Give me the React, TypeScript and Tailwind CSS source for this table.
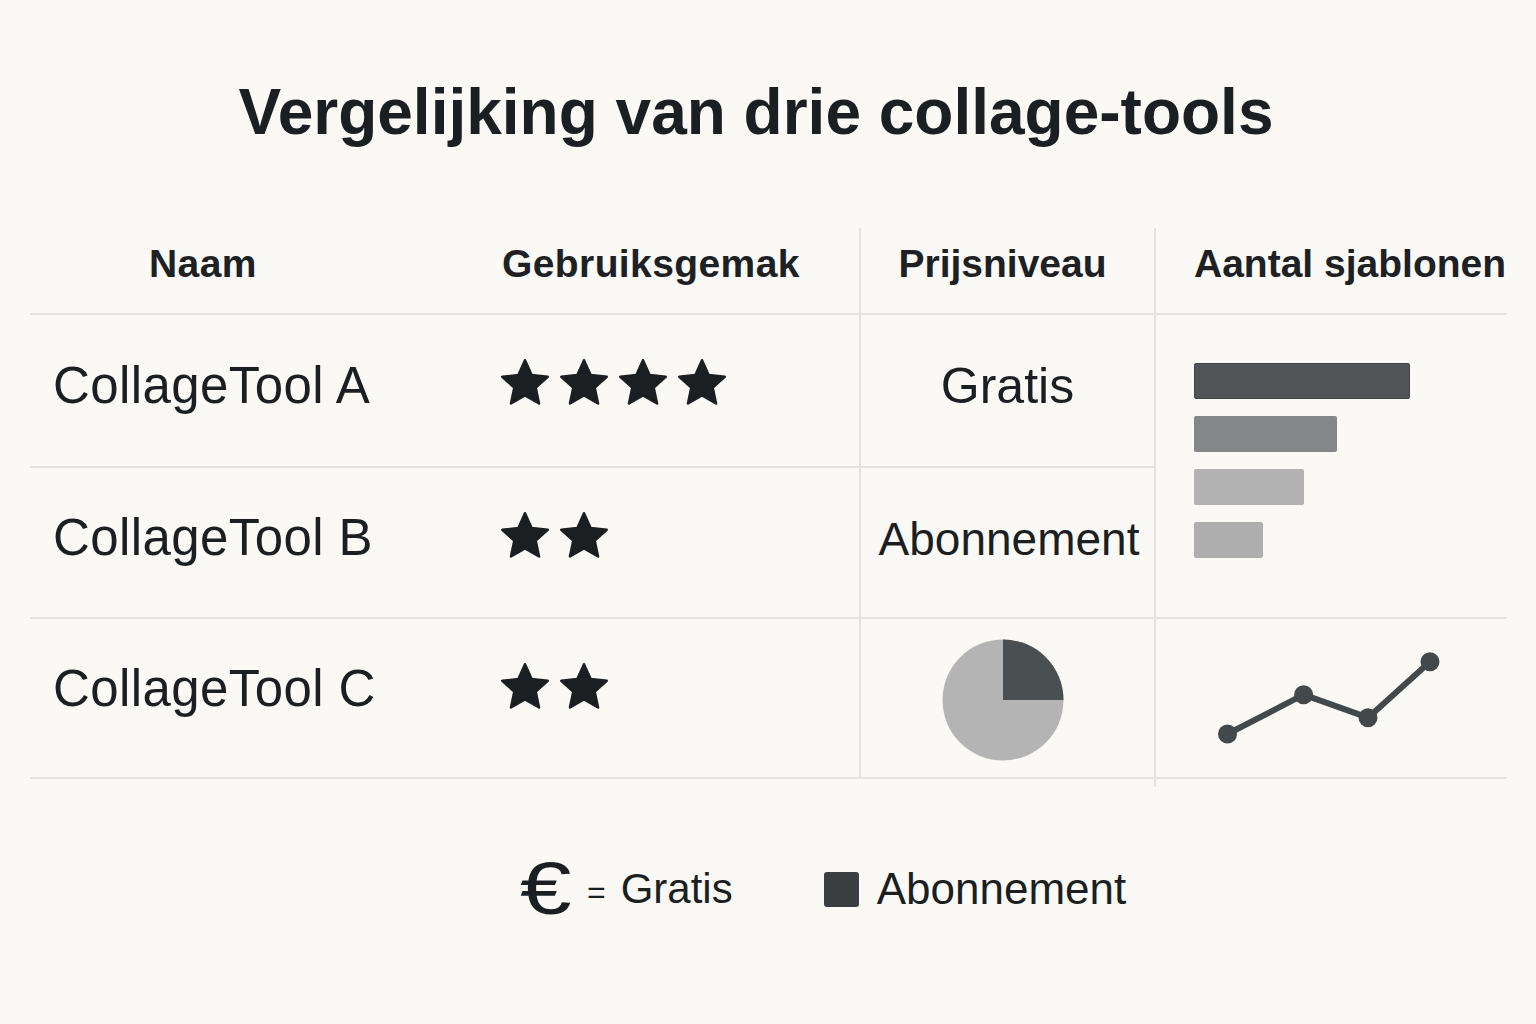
import React from 'react';

const line = 'border-[#e6e3df]';

function starPoints(cx: number, cy: number, R: number, r: number) {
  const pts: string[] = [];
  for (let i = 0; i < 10; i++) {
    const rad = i % 2 === 0 ? R : r;
    const a = (-90 + i * 36) * (Math.PI / 180);
    pts.push(`${(cx + rad * Math.cos(a)).toFixed(2)},${(cy + rad * Math.sin(a)).toFixed(2)}`);
  }
  return pts.join(' ');
}

const STAR = starPoints(24, 25.15, 23.9, 11.3);

const Star: React.FC = () => (
  <svg width="48" height="46" viewBox="0 0 48 46" className="shrink-0">
    <polygon points={STAR} fill="#1b1f22" stroke="#1b1f22" strokeWidth="2.5" strokeLinejoin="round" />
  </svg>
);

const Stars: React.FC<{ count: number }> = ({ count }) => (
  <div className="flex gap-[11px]">
    {Array.from({ length: count }).map((_, i) => (
      <Star key={i} />
    ))}
  </div>
);

const bars = [
  { w: 'w-[216px]', c: 'bg-[#515557] border border-[#3f4345]' },
  { w: 'w-[143px]', c: 'bg-[#858687]' },
  { w: 'w-[110px]', c: 'bg-[#b3b3b4]' },
  { w: 'w-[69px]', c: 'bg-[#aeaeaf]' },
];

export default function App() {
  return (
    <div className="min-h-screen w-full bg-[#fbf9f6] font-['Liberation_Sans',Arial,sans-serif] text-[#1b1f22]">
      {/* Title */}
      <h1 className="pt-[80px] pr-[24px] text-center text-[64px] font-bold leading-none">
        Vergelijking van drie collage-tools
      </h1>

      {/* Comparison table */}
      <div className="mt-[84px] ml-[30px] grid grid-cols-[447px_384px_295px_351px] grid-rows-[87px_153px_151px_160px_8px]">
        {/* Header */}
        <div className={`border-b-2 ${line} pl-[119px] pt-[16px] text-[39px] font-bold leading-none tracking-[0.4px] text-[#1d2124]`}>
          Naam
        </div>
        <div className={`border-b-2 border-r-2 ${line} pl-[25px] pt-[16px] text-[39px] font-bold leading-none tracking-[0.4px] text-[#1d2124]`}>
          Gebruiksgemak
        </div>
        <div className={`border-b-2 border-r-2 ${line} pr-[10px] pt-[16px] text-center text-[39px] font-bold leading-none text-[#1d2124]`}>
          Prijsniveau
        </div>
        <div className={`border-b-2 ${line} pl-[38px] pt-[16px] whitespace-nowrap text-[39px] font-bold leading-none text-[#1d2124]`}>
          Aantal sjablonen
        </div>

        {/* Row A */}
        <div className={`border-b-2 ${line} pl-[23px] pt-[45px] text-[51px] leading-none tracking-[0.4px]`}>CollageTool A</div>
        <div className={`border-b-2 border-r-2 ${line} pl-[24px] pt-[44px]`}>
          <Stars count={4} />
        </div>
        <div className={`border-b-2 border-r-2 ${line} pt-[46px] text-center text-[50px] leading-none`}>Gratis</div>
        <div className={`row-span-2 border-b-2 ${line} flex flex-col gap-[17px] pl-[38px] pt-[48px]`}>
          {bars.map((b, i) => (
            <div key={i} className={`h-[36px] rounded-[2px] ${b.w} ${b.c}`} />
          ))}
        </div>

        {/* Row B */}
        <div className={`border-b-2 ${line} pl-[23px] pt-[44px] text-[51px] leading-none tracking-[0.4px]`}>CollageTool B</div>
        <div className={`border-b-2 border-r-2 ${line} pl-[24px] pt-[44px]`}>
          <Stars count={2} />
        </div>
        <div className={`border-b-2 border-r-2 ${line} pt-[48px] pl-[3px] text-center text-[46px] leading-none whitespace-nowrap`}>
          Abonnement
        </div>

        {/* Row C */}
        <div className={`border-b-2 ${line} pl-[23px] pt-[44px] text-[51px] leading-none tracking-[0.4px]`}>CollageTool C</div>
        <div className={`border-b-2 border-r-2 ${line} pl-[24px] pt-[44px]`}>
          <Stars count={2} />
        </div>
        <div className={`border-b-2 border-r-2 ${line} flex justify-center pr-[10px] pt-[20px]`}>
          <svg width="122" height="122" viewBox="0 0 122 122">
            <circle cx="61" cy="61" r="60.5" fill="#b4b4b5" />
            <path d="M61 61 L61 0.5 A60.5 60.5 0 0 1 121.5 61 Z" fill="#4a4f51" />
          </svg>
        </div>
        <div className={`border-b-2 ${line} pl-[54px] pt-[26px]`}>
          <svg width="235" height="105" viewBox="0 0 235 105">
            <polyline
              points="17.5,89 93.6,49.7 158,72.7 220,16.7"
              fill="none"
              stroke="#43484a"
              strokeWidth="6"
              strokeLinejoin="round"
            />
            <circle cx="17.5" cy="89" r="9.5" fill="#43484a" />
            <circle cx="93.6" cy="49.7" r="9.5" fill="#43484a" />
            <circle cx="158" cy="72.7" r="9.5" fill="#43484a" />
            <circle cx="220" cy="16.7" r="9.5" fill="#43484a" />
          </svg>
        </div>

        {/* tail of the last divider */}
        <div />
        <div />
        <div className={`border-r-2 ${line}`} />
        <div />
      </div>

      {/* Legend */}
      <div className="mt-[66px] ml-[520px] flex h-[72px] items-center">
        <span className="inline-block w-[52px] origin-left scale-x-125 text-[74px] leading-none">€</span>
        <span className="ml-[15px] mt-[6px] text-[32px] leading-none">=</span>
        <span className="ml-[15px] text-[42px] leading-none">Gratis</span>
        <span className="ml-[91px] h-[35px] w-[35px] rounded-[3px] bg-[#3c3f41]" />
        <span className="ml-[18px] text-[44px] leading-none">Abonnement</span>
      </div>
    </div>
  );
}
